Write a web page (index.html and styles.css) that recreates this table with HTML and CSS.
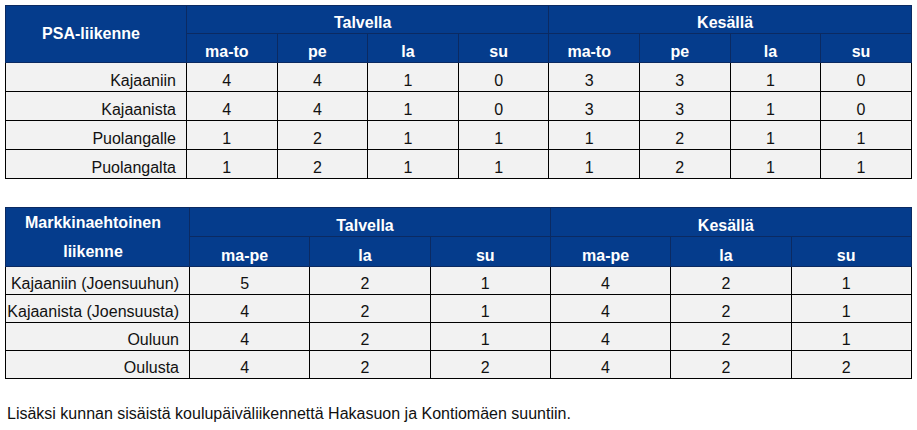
FILE: index.html
```html
<!DOCTYPE html>
<html lang="fi">
<head>
<meta charset="utf-8">
<title>Liikenne</title>
<link rel="stylesheet" href="styles.css">
</head>
<body>
<table class="grid grid-psa">
  <colgroup>
    <col class="c-first">
    <col span="8" class="c-num">
  </colgroup>
  <thead>
    <tr class="h1">
      <th rowspan="2" class="corner">PSA-liikenne</th>
      <th colspan="4">Talvella</th>
      <th colspan="4">Kesällä</th>
    </tr>
    <tr class="h2">
      <th>ma-to</th><th>pe</th><th>la</th><th>su</th>
      <th>ma-to</th><th>pe</th><th>la</th><th>su</th>
    </tr>
  </thead>
  <tbody>
    <tr><td class="name">Kajaaniin</td><td>4</td><td>4</td><td>1</td><td>0</td><td>3</td><td>3</td><td>1</td><td>0</td></tr>
    <tr><td class="name">Kajaanista</td><td>4</td><td>4</td><td>1</td><td>0</td><td>3</td><td>3</td><td>1</td><td>0</td></tr>
    <tr><td class="name">Puolangalle</td><td>1</td><td>2</td><td>1</td><td>1</td><td>1</td><td>2</td><td>1</td><td>1</td></tr>
    <tr><td class="name">Puolangalta</td><td>1</td><td>2</td><td>1</td><td>1</td><td>1</td><td>2</td><td>1</td><td>1</td></tr>
  </tbody>
</table>

<table class="grid grid-market">
  <colgroup>
    <col class="c-first2">
    <col span="6" class="c-num2">
  </colgroup>
  <thead>
    <tr class="h1">
      <th rowspan="2" class="corner corner-two">Markkinaehtoinen<br>liikenne</th>
      <th colspan="3">Talvella</th>
      <th colspan="3">Kesällä</th>
    </tr>
    <tr class="h2">
      <th>ma-pe</th><th>la</th><th>su</th>
      <th>ma-pe</th><th>la</th><th>su</th>
    </tr>
  </thead>
  <tbody>
    <tr><td class="name">Kajaaniin (Joensuuhun)</td><td>5</td><td>2</td><td>1</td><td>4</td><td>2</td><td>1</td></tr>
    <tr><td class="name">Kajaanista (Joensuusta)</td><td>4</td><td>2</td><td>1</td><td>4</td><td>2</td><td>1</td></tr>
    <tr><td class="name">Ouluun</td><td>4</td><td>2</td><td>1</td><td>4</td><td>2</td><td>1</td></tr>
    <tr><td class="name">Oulusta</td><td>4</td><td>2</td><td>2</td><td>4</td><td>2</td><td>2</td></tr>
  </tbody>
</table>

<p class="note">Lisäksi kunnan sisäistä koulupäiväliikennettä Hakasuon ja Kontiomäen suuntiin.</p>
</body>
</html>
```

FILE: styles.css
```css
html, body {
  margin: 0;
  padding: 0;
  background: #ffffff;
}

body {
  padding: 5px 0 0 5px;
  font-family: "Liberation Sans", Arial, sans-serif;
  color: #111111;
}

.grid {
  border-collapse: collapse;
  table-layout: fixed;
  font-size: 16px;
}

.grid-psa {
  width: 906px;
}

.grid-market {
  width: 906px;
  margin-top: 28px;
}

.c-first { width: 181px; }
.c-num { width: 90.6px; }
.c-first2 { width: 184px; }
.c-num2 { width: 120.3px; }

.grid th,
.grid td {
  border: 1px solid #000000;
  padding: 0 10px 1px 0;
  line-height: 18px;
  vertical-align: bottom;
  text-align: center;
  white-space: nowrap;
  overflow: visible;
}

.grid th {
  background: #053c8c;
  color: #ffffff;
  font-weight: bold;
  border-color: #0b2a62;
}

.grid td {
  background: #f2f2f2;
  color: #111111;
}

.grid .h1 { height: 28px; }
.grid .h2 { height: 29px; }
.grid tbody tr { height: 29px; }
.grid-market tbody tr { height: 28px; }

.grid th.corner {
  vertical-align: middle;
  padding: 0 10px 0 0;
}

.grid th.corner-two {
  line-height: 29px;
  vertical-align: bottom;
  padding: 0 9px 0 0;
}

.grid td.name {
  text-align: right;
  padding-right: 10px;
}

.note {
  margin: 26px 0 0 2px;
  font-size: 16px;
  line-height: 18px;
  color: #111111;
}
```
